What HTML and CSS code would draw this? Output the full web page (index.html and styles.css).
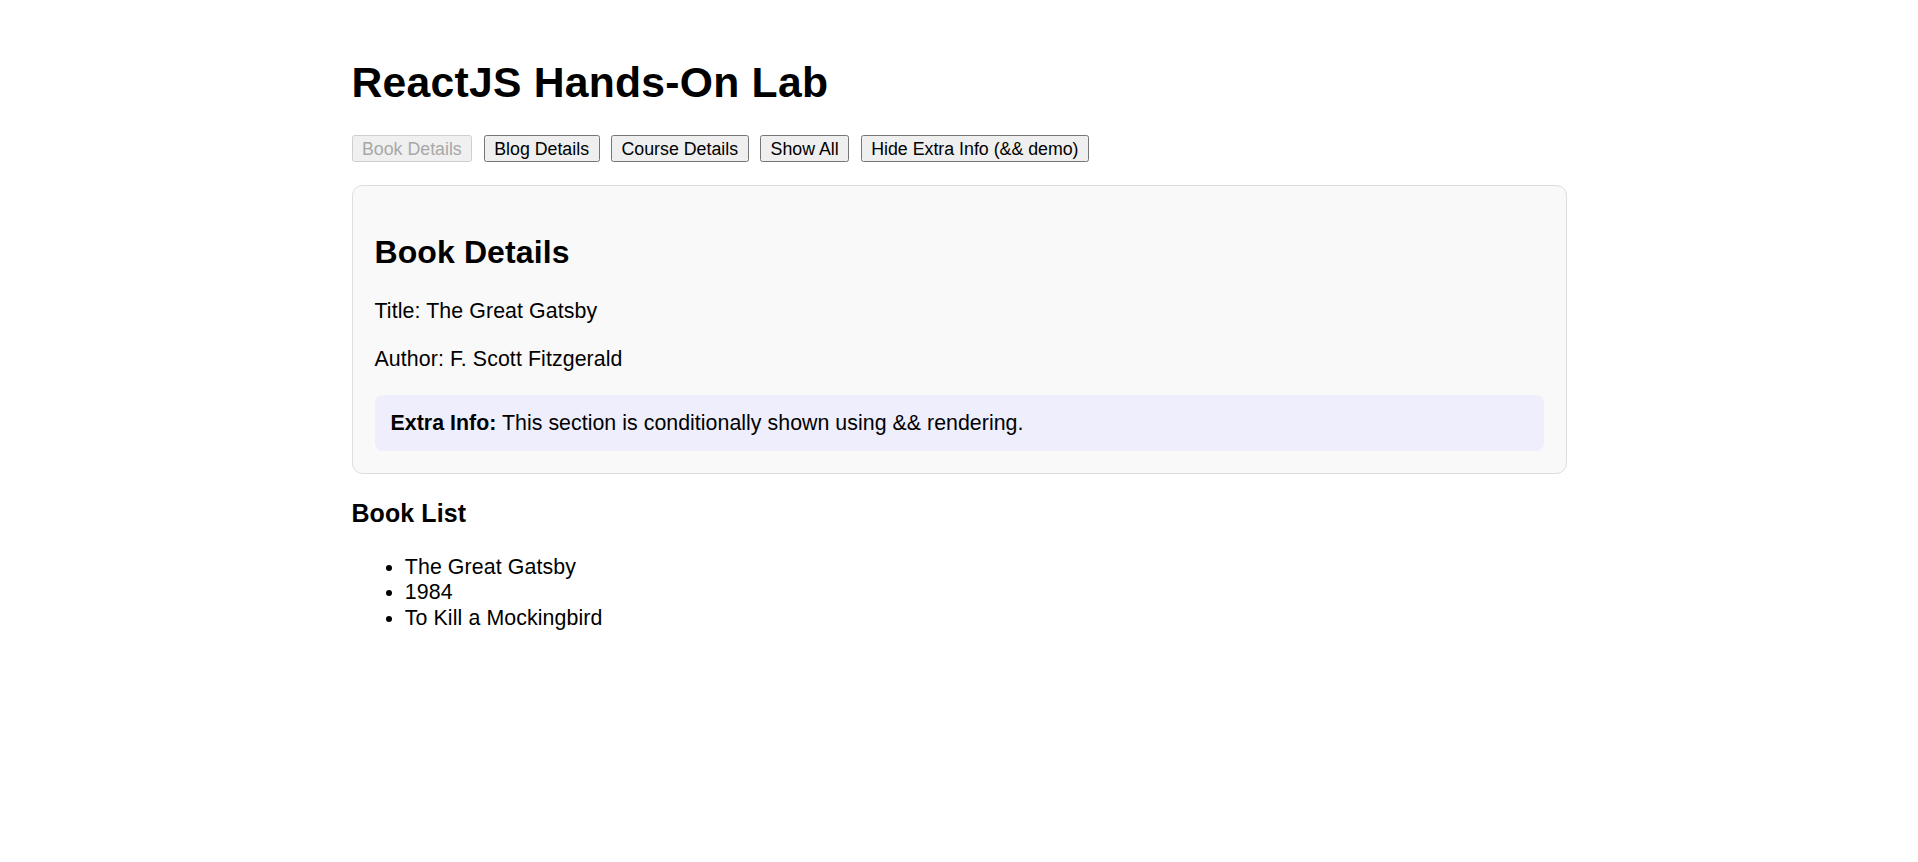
FILE: index.html
```html
<!DOCTYPE html>
<html lang="en">
<head>
<meta charset="utf-8">
<title>ReactJS Hands-On Lab</title>
<link rel="stylesheet" href="styles.css">
</head>
<body>
<div class="app">
  <h1 class="app-title">ReactJS Hands-On Lab</h1>
  <div class="toolbar">
    <button class="btn" disabled>Book Details</button>
    <button class="btn">Blog Details</button>
    <button class="btn">Course Details</button>
    <button class="btn">Show All</button>
    <button class="btn">Hide Extra Info (&amp;&amp; demo)</button>
  </div>
  <section class="card">
    <h2 class="card-title">Book Details</h2>
    <p class="card-text">Title: The Great Gatsby</p>
    <p class="card-text">Author: F. Scott Fitzgerald</p>
    <div class="extra"><strong>Extra Info:</strong> This section is conditionally shown using &amp;&amp; rendering.</div>
  </section>
  <h3 class="list-title">Book List</h3>
  <ul class="book-list">
    <li>The Great Gatsby</li>
    <li>1984</li>
    <li>To Kill a Mockingbird</li>
  </ul>
</div>
</body>
</html>
```
FILE: styles.css
```css
html, body {
  margin: 0;
  padding: 0;
  background: #ffffff;
}
body {
  font-family: "Liberation Sans", Arial, sans-serif;
  color: #000;
}
.app {
  width: 1215px;
  margin: 0 auto;
  padding-top: 58px;
}
.app-title {
  font-size: 42.67px;
  line-height: 49px;
  font-weight: bold;
  letter-spacing: 0.25px;
  margin: 0 0 28.3px 0;
}
.toolbar {
  display: flex;
  gap: 11.5px;
  align-items: flex-start;
  margin-bottom: 23px;
}
.btn {
  font-family: "Liberation Sans", Arial, sans-serif;
  font-size: 17.78px;
  line-height: 20.4px;
  height: 27px;
  box-sizing: border-box;
  padding: 0 9.5px;
  background: #efefef;
  color: #000;
  border: 1px solid #767676;
  border-radius: 2.5px;
  cursor: pointer;
}
.btn:disabled {
  background: #f0f0f0;
  color: #a8a8a8;
  border-color: #cfcfcf;
  cursor: default;
}
.card {
  background: #f9f9f9;
  border: 1px solid #dddddd;
  border-radius: 10.5px;
  padding: 22px;
}
.card-title {
  font-size: 32px;
  line-height: 36.8px;
  font-weight: bold;
  letter-spacing: 0.1px;
  margin: 25.5px 0 27px 0;
}
.card-text {
  font-size: 21.33px;
  line-height: 26.5px;
  letter-spacing: 0.1px;
  margin: 22.3px 0;
}
.extra {
  background: #eeeefc;
  border-radius: 8px;
  padding: 15.5px 16px 15.5px 16px;
  font-size: 21.33px;
  line-height: 25.3px;
  letter-spacing: 0.04px;
}
.list-title {
  font-size: 24.96px;
  line-height: 28.7px;
  font-weight: bold;
  letter-spacing: 0.1px;
  margin: 25px 0 0 0;
}
.book-list {
  margin: 26.5px 0;
  padding-left: 53.3px;
  font-size: 21.33px;
  line-height: 25.8px;
  letter-spacing: 0.1px;
}
```
